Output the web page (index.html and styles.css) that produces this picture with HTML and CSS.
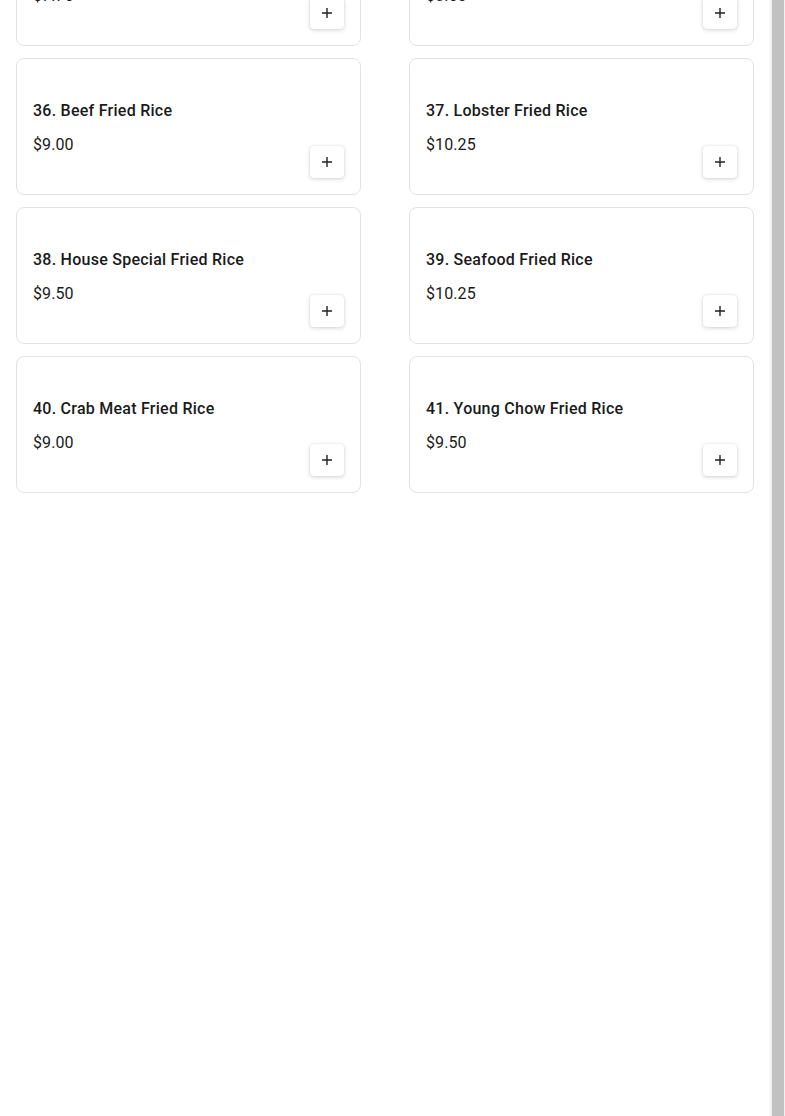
FILE: index.html
```html
<!DOCTYPE html>
<html lang="en">
<head>
<meta charset="utf-8">
<title>Fried Rice</title>
<link rel="stylesheet" href="styles.css">
</head>
<body>
<div class="page">
  <main class="content">
    <div class="grid">
      <div class="card"><div class="info"><div class="name">34. Pork Fried Rice</div><div class="price">$7.75</div></div><button class="add" aria-label="Add"><svg viewBox="0 0 12 12" width="12" height="12"><path d="M6 1v10M1 6h10" stroke="#222" stroke-width="1.4" fill="none"/></svg></button></div>
      <div class="card"><div class="info"><div class="name">35. Chicken Fried Rice</div><div class="price">$8.50</div></div><button class="add" aria-label="Add"><svg viewBox="0 0 12 12" width="12" height="12"><path d="M6 1v10M1 6h10" stroke="#222" stroke-width="1.4" fill="none"/></svg></button></div>
      <div class="card"><div class="info"><div class="name">36. Beef Fried Rice</div><div class="price">$9.00</div></div><button class="add" aria-label="Add"><svg viewBox="0 0 12 12" width="12" height="12"><path d="M6 1v10M1 6h10" stroke="#222" stroke-width="1.4" fill="none"/></svg></button></div>
      <div class="card"><div class="info"><div class="name">37. Lobster Fried Rice</div><div class="price">$10.25</div></div><button class="add" aria-label="Add"><svg viewBox="0 0 12 12" width="12" height="12"><path d="M6 1v10M1 6h10" stroke="#222" stroke-width="1.4" fill="none"/></svg></button></div>
      <div class="card"><div class="info"><div class="name">38. House Special Fried Rice</div><div class="price">$9.50</div></div><button class="add" aria-label="Add"><svg viewBox="0 0 12 12" width="12" height="12"><path d="M6 1v10M1 6h10" stroke="#222" stroke-width="1.4" fill="none"/></svg></button></div>
      <div class="card"><div class="info"><div class="name">39. Seafood Fried Rice</div><div class="price">$10.25</div></div><button class="add" aria-label="Add"><svg viewBox="0 0 12 12" width="12" height="12"><path d="M6 1v10M1 6h10" stroke="#222" stroke-width="1.4" fill="none"/></svg></button></div>
      <div class="card"><div class="info"><div class="name">40. Crab Meat Fried Rice</div><div class="price">$9.00</div></div><button class="add" aria-label="Add"><svg viewBox="0 0 12 12" width="12" height="12"><path d="M6 1v10M1 6h10" stroke="#222" stroke-width="1.4" fill="none"/></svg></button></div>
      <div class="card"><div class="info"><div class="name">41. Young Chow Fried Rice</div><div class="price">$9.50</div></div><button class="add" aria-label="Add"><svg viewBox="0 0 12 12" width="12" height="12"><path d="M6 1v10M1 6h10" stroke="#222" stroke-width="1.4" fill="none"/></svg></button></div>
    </div>
  </main>
  <div class="scrollbar"><div class="thumb"></div></div>
</div>
</body>
</html>
```
FILE: styles.css
```css
html, body {
  margin: 0;
  padding: 0;
  height: 100%;
  overflow: hidden;
  background: #ffffff;
  font-family: Roboto, "Liberation Sans", Arial, sans-serif;
  color: #1f1f1f;
}

.page {
  display: flex;
  height: 1116px;
  overflow: hidden;
}

.content {
  flex: 1;
  padding: 0 16px;
  overflow: hidden;
}

.grid {
  display: grid;
  grid-template-columns: 345px 345px;
  column-gap: 48px;
  row-gap: 12px;
  margin-top: -91px;
}

.card {
  box-sizing: border-box;
  height: 137px;
  border: 1px solid #e2e2e2;
  border-radius: 8px;
  padding: 16px;
  display: flex;
  justify-content: space-between;
  align-items: flex-end;
  background: #fff;
}

.info {
  align-self: stretch;
  padding-top: 24px;
}

.name {
  font-size: 16px;
  font-weight: 500;
  line-height: 24px;
  color: #1a1a1a;
  letter-spacing: 0.25px;
}

.price {
  margin-top: 10px;
  font-size: 16px;
  font-weight: 400;
  line-height: 24px;
  color: #1a1a1a;
  letter-spacing: 0.1px;
}

.add {
  width: 34px;
  height: 32px;
  padding: 0;
  border: none;
  border-radius: 4px;
  background: #fff;
  box-shadow: 0 1px 4px rgba(0, 0, 0, 0.18), 0 0 1px rgba(0, 0, 0, 0.12);
  display: flex;
  align-items: center;
  justify-content: center;
  cursor: pointer;
}

.scrollbar {
  width: 15px;
  background: #f1f1f1;
  display: flex;
  justify-content: center;
  padding: 0 1px 0 2px;
  box-sizing: border-box;
}

.thumb {
  flex: 1;
  background: #c1c1c1;
}
```
